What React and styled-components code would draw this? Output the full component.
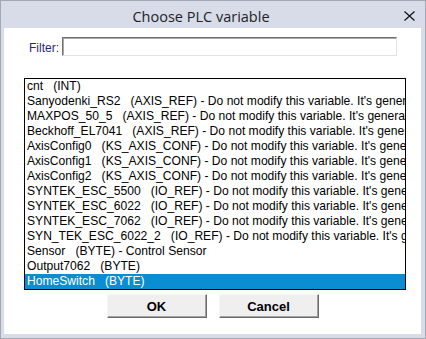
import React from 'react'
import styled, { createGlobalStyle } from 'styled-components'

const GlobalStyle = createGlobalStyle`
  html, body {
    margin: 0;
    padding: 0;
    background: #ffffff;
  }
  * {
    box-sizing: border-box;
  }
`

const variables = [
  { name: 'cnt', type: 'INT' },
  { name: 'Sanyodenki_RS2', type: 'AXIS_REF', note: "Do not modify this variable. It's generated automatically" },
  { name: 'MAXPOS_50_5', type: 'AXIS_REF', note: "Do not modify this variable. It's generated automatically" },
  { name: 'Beckhoff_EL7041', type: 'AXIS_REF', note: "Do not modify this variable. It's generated automatically" },
  { name: 'AxisConfig0', type: 'KS_AXIS_CONF', note: "Do not modify this variable. It's generated automatically" },
  { name: 'AxisConfig1', type: 'KS_AXIS_CONF', note: "Do not modify this variable. It's generated automatically" },
  { name: 'AxisConfig2', type: 'KS_AXIS_CONF', note: "Do not modify this variable. It's generated automatically" },
  { name: 'SYNTEK_ESC_5500', type: 'IO_REF', note: "Do not modify this variable. It's generated automatically" },
  { name: 'SYNTEK_ESC_6022', type: 'IO_REF', note: "Do not modify this variable. It's generated automatically" },
  { name: 'SYNTEK_ESC_7062', type: 'IO_REF', note: "Do not modify this variable. It's generated automatically" },
  { name: 'SYN_TEK_ESC_6022_2', type: 'IO_REF', note: "Do not modify this variable. It's generated automatically" },
  { name: 'Sensor', type: 'BYTE', note: 'Control Sensor' },
  { name: 'Output7062', type: 'BYTE' },
  { name: 'HomeSwitch', type: 'BYTE' },
]

const App = () => {
  return (
    <>
      <GlobalStyle />
      <Window>
        <TitleBar>
          <Title>Choose PLC variable</Title>
          <CloseButton aria-label="Close">
            <svg width="11" height="10" viewBox="0 0 11 10">
              <path d="M0.5 0.5 L10.5 9.5 M10.5 0.5 L0.5 9.5" stroke="#111" strokeWidth="1.2" fill="none" />
            </svg>
          </CloseButton>
        </TitleBar>
        <Body>
          <FilterRow>
            <FilterLabel>Filter:</FilterLabel>
            <FilterInput type="text" />
          </FilterRow>
          <List>
            {variables.map((v, i) => (
              <Row key={v.name} selected={i === variables.length - 1}>
                {`${v.name}   (${v.type})${v.note ? ' - ' + v.note : ''}`}
              </Row>
            ))}
          </List>
          <Buttons>
            <Button>OK</Button>
            <Button>Cancel</Button>
          </Buttons>
        </Body>
      </Window>
    </>
  )
}

const Window = styled.div`
  width: 426px;
  height: 339px;
  border: 1px solid #a4a8b2;
  background: #d7dce8;
  display: flex;
  flex-direction: column;
  font-family: "Liberation Sans", Arial, sans-serif;
`

const TitleBar = styled.div`
  height: 27px;
  display: flex;
  align-items: stretch;
`

const Title = styled.div`
  flex: 1;
  text-align: center;
  font-family: "Open Sans", "Noto Sans", sans-serif;
  font-size: 14.5px;
  line-height: 27px;
  padding-top: 2px;
  color: #1e1e1e;
`

const CloseButton = styled.div`
  width: 24px;
  display: flex;
  align-items: center;
  padding-left: 3px;
  padding-top: 3px;
`

const Body = styled.div`
  height: 306px;
  margin: 0 4px 0 3px;
  background: #ffffff;
  display: flex;
  flex-direction: column;
`

const FilterRow = styled.div`
  display: flex;
  align-items: flex-end;
  gap: 3px;
  padding: 9px 0 0 25px;
`

const FilterLabel = styled.span`
  font-size: 12px;
  line-height: 14px;
  color: #1f2a7c;
  padding-bottom: 1px;
`

const FilterInput = styled.input`
  width: 335px;
  height: 19px;
  margin: 0;
  padding: 0 2px;
  border: 1px solid;
  border-color: #6f6f6f #e3e3e3 #e3e3e3 #6f6f6f;
  box-shadow: inset 1px 1px 0 #a8a8a8;
  background: #ffffff;
  outline: none;
  font: 12px "Liberation Sans", Arial, sans-serif;
`

const List = styled.div`
  width: 382px;
  height: 212px;
  margin: 22px 0 0 20px;
  border: 1px solid #000000;
  overflow: hidden;
`

const Row = styled.div`
  height: 15px;
  line-height: 15px;
  padding-left: 2px;
  font-size: 12.1px;
  white-space: pre;
  overflow: hidden;
  color: ${p => (p.selected ? '#ffffff' : '#000000')};
  background: ${p => (p.selected ? '#0b8dd1' : 'transparent')};
`

const Buttons = styled.div`
  display: flex;
  justify-content: center;
  gap: 12px;
  margin-top: 4px;
`

const Button = styled.button`
  width: 100px;
  height: 24px;
  margin: 0;
  padding: 0;
  background: #efefef;
  border: 1px solid;
  border-color: #f7f7f7 #6a6a6a #6a6a6a #f7f7f7;
  box-shadow: inset -1px -1px 0 #a3a3a3;
  font: bold 13px "Liberation Sans", Arial, sans-serif;
  color: #000000;
`

export default App
